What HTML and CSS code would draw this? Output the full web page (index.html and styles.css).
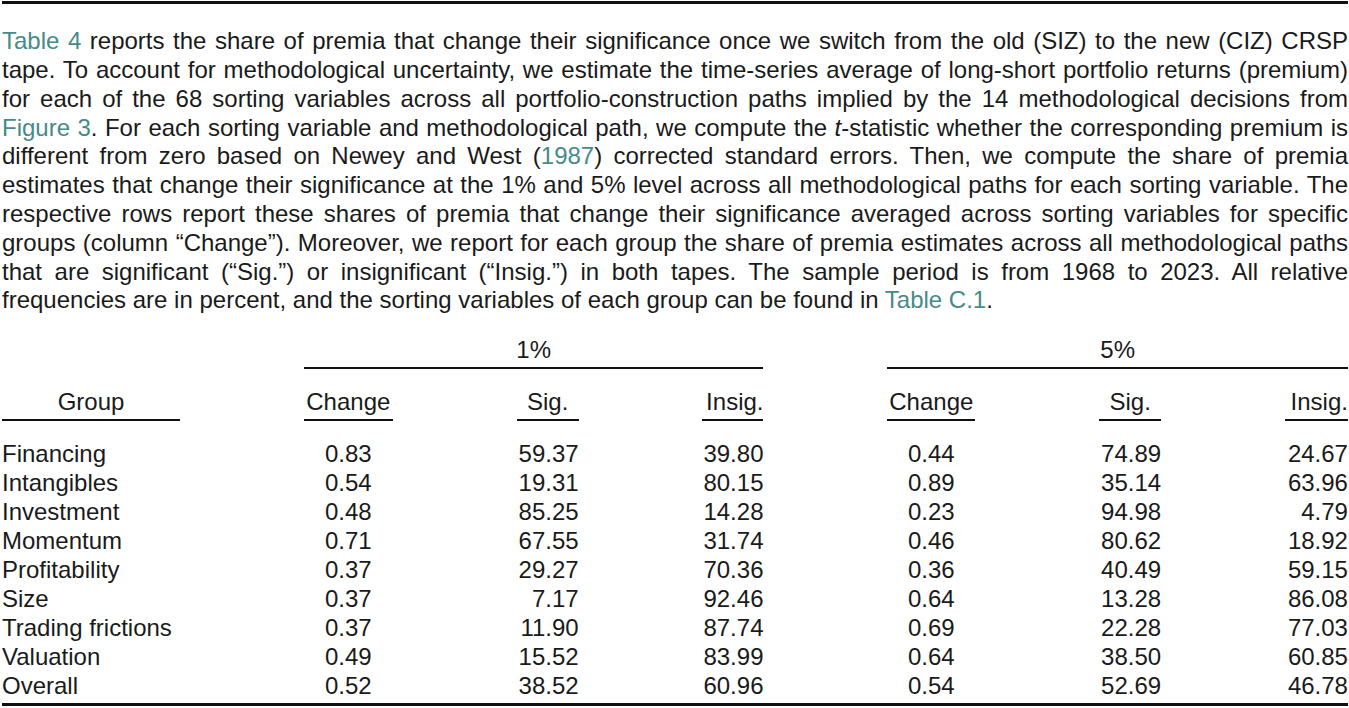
FILE: index.html
```html
<!DOCTYPE html>
<html lang="en">
<head>
<meta charset="utf-8">
<title>Table 4</title>
<link rel="stylesheet" href="styles.css">
</head>
<body>
<div class="page">
  <div class="toprule"></div>
  <p class="caption">
    <span class="ln"><a class="ref">Table 4</a> reports the share of premia that change their significance once we switch from the old (SIZ) to the new (CIZ) CRSP</span>
    <span class="ln">tape. To account for methodological uncertainty, we estimate the time-series average of long-short portfolio returns (premium)</span>
    <span class="ln">for each of the 68 sorting variables across all portfolio-construction paths implied by the 14 methodological decisions from</span>
    <span class="ln"><a class="ref">Figure 3</a>. For each sorting variable and methodological path, we compute the <i>t</i>-statistic whether the corresponding premium is</span>
    <span class="ln">different from zero based on Newey and West (<a class="ref">1987</a>) corrected standard errors. Then, we compute the share of premia</span>
    <span class="ln">estimates that change their significance at the 1% and 5% level across all methodological paths for each sorting variable. The</span>
    <span class="ln">respective rows report these shares of premia that change their significance averaged across sorting variables for specific</span>
    <span class="ln">groups (column “Change”). Moreover, we report for each group the share of premia estimates across all methodological paths</span>
    <span class="ln">that are significant (“Sig.”) or insignificant (“Insig.”) in both tapes. The sample period is from 1968 to 2023. All relative</span>
    <span class="ln last">frequencies are in percent, and the sorting variables of each group can be found in <a class="ref">Table C.1</a>.</span>
  </p>

  <div class="table">
    <div class="tr head1">
      <span></span>
      <span class="grp">1%</span>
      <span class="grp">5%</span>
    </div>
    <div class="tr head2">
      <span class="c">Group</span>
      <span class="c">Change</span>
      <span class="c">Sig.</span>
      <span class="r">Insig.</span>
      <span class="c">Change</span>
      <span class="c">Sig.</span>
      <span class="r">Insig.</span>
    </div>
    <div class="tbody">
      <div class="tr"><span>Financing</span><span class="c">0.83</span><span class="r">59.37</span><span class="r">39.80</span><span class="c">0.44</span><span class="r">74.89</span><span class="r">24.67</span></div>
      <div class="tr"><span>Intangibles</span><span class="c">0.54</span><span class="r">19.31</span><span class="r">80.15</span><span class="c">0.89</span><span class="r">35.14</span><span class="r">63.96</span></div>
      <div class="tr"><span>Investment</span><span class="c">0.48</span><span class="r">85.25</span><span class="r">14.28</span><span class="c">0.23</span><span class="r">94.98</span><span class="r">4.79</span></div>
      <div class="tr"><span>Momentum</span><span class="c">0.71</span><span class="r">67.55</span><span class="r">31.74</span><span class="c">0.46</span><span class="r">80.62</span><span class="r">18.92</span></div>
      <div class="tr"><span>Profitability</span><span class="c">0.37</span><span class="r">29.27</span><span class="r">70.36</span><span class="c">0.36</span><span class="r">40.49</span><span class="r">59.15</span></div>
      <div class="tr"><span>Size</span><span class="c">0.37</span><span class="r">7.17</span><span class="r">92.46</span><span class="c">0.64</span><span class="r">13.28</span><span class="r">86.08</span></div>
      <div class="tr"><span>Trading frictions</span><span class="c">0.37</span><span class="r">11.90</span><span class="r">87.74</span><span class="c">0.69</span><span class="r">22.28</span><span class="r">77.03</span></div>
      <div class="tr"><span>Valuation</span><span class="c">0.49</span><span class="r">15.52</span><span class="r">83.99</span><span class="c">0.64</span><span class="r">38.50</span><span class="r">60.85</span></div>
      <div class="tr"><span>Overall</span><span class="c">0.52</span><span class="r">38.52</span><span class="r">60.96</span><span class="c">0.54</span><span class="r">52.69</span><span class="r">46.78</span></div>
    </div>
  </div>
</div>
</body>
</html>
```

FILE: styles.css
```css
html, body {
  margin: 0;
  padding: 0;
  background: #ffffff;
}

body {
  font-family: "Liberation Sans", Arial, Helvetica, sans-serif;
  font-size: 24px;
  color: #1a1a1a;
}

.page {
  padding: 0 1px 0 2px;
}

.toprule {
  height: 3px;
  margin-top: 1px;
  background: #111111;
}

.caption {
  margin: 23.3px 0 0 0;
  line-height: 28.8px;
}

.ln {
  display: block;
  white-space: normal;
  text-align: justify;
  text-align-last: justify;
}

.ln.last {
  text-align-last: left;
}

.ref {
  color: #458b87;
  text-decoration: none;
}

.caption i {
  font-style: italic;
}

.table {
  margin-top: 20px;
  line-height: 29px;
}

.tr {
  display: grid;
  grid-template-columns: 178px 89px 62px 61px 88px 62px 63px;
  justify-content: space-between;
  white-space: nowrap;
}

.c {
  text-align: center;
}

.r {
  text-align: right;
}

.grp {
  grid-column: span 3;
  text-align: center;
  padding-bottom: 3px;
  border-bottom: 2px solid #111111;
}

.head2 {
  padding-top: 18px;
}

.head2 > span {
  padding-bottom: 3px;
  border-bottom: 2px solid #111111;
}

.tbody {
  padding-top: 18px;
  padding-bottom: 3px;
  border-bottom: 3px solid #111111;
}
```
